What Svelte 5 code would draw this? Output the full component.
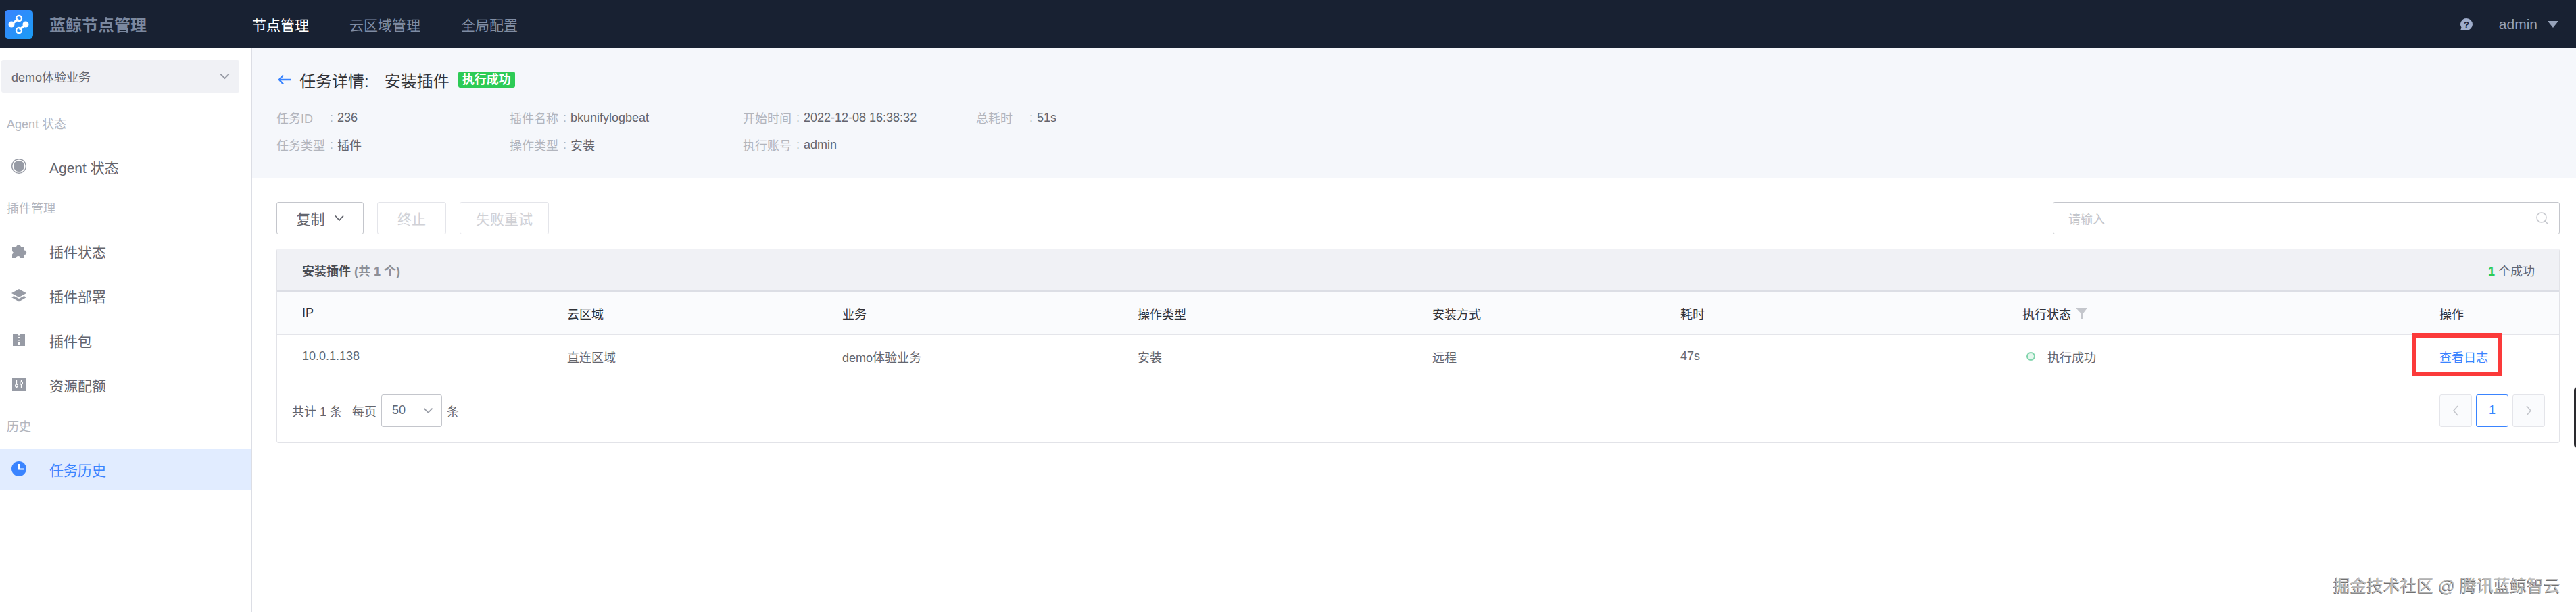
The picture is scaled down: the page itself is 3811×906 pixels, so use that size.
<script lang="ts">
	const navItems = ['节点管理', '云区域管理', '全局配置'];

	const metaColumns = [
		[
			{ label: '任务ID', value: '236' },
			{ label: '任务类型', value: '插件' }
		],
		[
			{ label: '插件名称', value: 'bkunifylogbeat' },
			{ label: '操作类型', value: '安装' }
		],
		[
			{ label: '开始时间', value: '2022-12-08 16:38:32' },
			{ label: '执行账号', value: 'admin' }
		],
		[{ label: '总耗时', value: '51s' }]
	];

	const columns = ['IP', '云区域', '业务', '操作类型', '安装方式', '耗时', '执行状态', '操作'];
</script>

<div class="page">
	<header class="topbar">
		<div class="brand">
			<span class="logo">
				<svg viewBox="0 0 42 42" width="42" height="42">
					<path d="M10 21 20 13M31 21 22 29" stroke="#fff" stroke-width="3.200" fill="none" />
					<circle cx="10" cy="21" r="4.500" fill="#fff" />
					<circle cx="31" cy="21" r="4.500" fill="#fff" />
					<circle cx="21" cy="12" r="4" fill="none" stroke="#fff" stroke-width="2.400" />
					<circle cx="21" cy="30" r="4" fill="none" stroke="#fff" stroke-width="2.400" />
				</svg>
			</span>
			<span class="brand-name">蓝鲸节点管理</span>
		</div>
		<nav class="nav">
			{#each navItems as item, i}
				<span class:current={i === 0}>{item}</span>
			{/each}
		</nav>
		<div class="user">
			<svg class="help" viewBox="0 0 20 20" width="20" height="20">
				<path d="M10 1a9 9 0 1 1 0 18H1.500v-1.500L2.600 15A9 9 0 0 1 10 1z" fill="#9fadcb" />
				<text x="10" y="14.500" text-anchor="middle" class="help-mark">?</text>
			</svg>
			<span>admin</span>
			<i class="user-caret"></i>
		</div>
	</header>

	<div class="body">
		<aside class="side">
			<div class="biz-select">
				<span>demo体验业务</span>
				<svg viewBox="0 0 16 10" width="15" height="10"><path d="M1.500 1.500 8 8l6.500-6.500" fill="none" stroke="#979ba5" stroke-width="2" /></svg>
			</div>

			<div class="group-label first">Agent 状态</div>
			<div class="menu-item last">
				<svg viewBox="0 0 24 24" width="24" height="24">
					<circle cx="12" cy="12" r="10.300" fill="none" stroke="#979ba5" stroke-width="1.400" />
					<circle cx="12" cy="12" r="8" fill="#979ba5" />
				</svg>
				<span>Agent 状态</span>
			</div>

			<div class="group-label">插件管理</div>
			<div class="menu-item">
				<svg viewBox="0 0 24 24" width="24" height="24">
					<path d="M2 7h6a3.500 3.500 0 1 1 7 0h5v4.500a3.200 3.200 0 1 1 0 6.400V23h-6a3 3 0 0 0-6 0H2v-5.500l2-2.500-2-2.500z" fill="#979ba5" />
				</svg>
				<span>插件状态</span>
			</div>
			<div class="menu-item">
				<svg viewBox="0 0 24 24" width="24" height="24">
					<path d="M12 3 23 9l-11 6L1 9z" fill="#979ba5" />
					<path d="M4.500 13 1 15l11 6.500L23 15l-3.500-2-7.500 4z" fill="#979ba5" />
				</svg>
				<span>插件部署</span>
			</div>
			<div class="menu-item">
				<svg viewBox="0 0 24 24" width="24" height="24">
					<path d="M3 3h18v18H3z" fill="#979ba5" />
					<path d="M11 4h3v1.500h-3zM10.500 8h3v1.500h-3zM11 12h3v1.500h-3zM10.500 16h3.500v3h-3.500z" fill="#fff" />
				</svg>
				<span>插件包</span>
			</div>
			<div class="menu-item last">
				<svg viewBox="0 0 24 24" width="24" height="24">
					<path d="M2 2h20v20H2z" fill="#979ba5" />
					<path d="M8.500 6v12M15.500 6v12" stroke="#fff" stroke-width="1.300" />
					<circle cx="8.500" cy="14" r="1.900" fill="#979ba5" stroke="#fff" stroke-width="1.300" />
					<circle cx="15.500" cy="10" r="1.900" fill="#979ba5" stroke="#fff" stroke-width="1.300" />
				</svg>
				<span>资源配额</span>
			</div>

			<div class="group-label">历史</div>
			<div class="menu-item active">
				<svg viewBox="0 0 24 24" width="24" height="24">
					<circle cx="12" cy="12" r="11" fill="#3a84ff" />
					<path d="M12 5v7.500h7" fill="none" stroke="#fff" stroke-width="2" />
				</svg>
				<span>任务历史</span>
			</div>
		</aside>

		<main class="main">
			<section class="detail-head">
				<div class="title-row">
					<svg viewBox="0 0 20 16" width="20" height="16"><path d="M8 1.500 2 8l6 6.500M2 8h17" fill="none" stroke="#3a84ff" stroke-width="2.500" /></svg>
					<span class="title">任务详情:</span>
					<span class="title plugin">安装插件</span>
					<span class="badge">执行成功</span>
				</div>
				<div class="meta">
					{#each metaColumns as col}
						<div class="meta-col">
							{#each col as row}
								<div class="meta-row">
									<span class="meta-label">{row.label}</span><span class="colon">:</span><span class="meta-value">{row.value}</span>
								</div>
							{/each}
						</div>
					{/each}
				</div>
			</section>

			<section class="content">
				<div class="toolbar">
					<button class="btn">复制
						<svg viewBox="0 0 14 10" width="14" height="10"><path d="M1 1.500 7 8l6-6.500" fill="none" stroke="#63656e" stroke-width="1.800" /></svg>
					</button>
					<button class="btn disabled stop">终止</button>
					<button class="btn disabled retry">失败重试</button>
					<div class="search">
						<span>请输入</span>
						<svg viewBox="0 0 20 20" width="20" height="20"><circle cx="9" cy="9" r="7" fill="none" stroke="#c4c6cc" stroke-width="1.500" /><path d="m14 14 4.500 4.500" stroke="#c4c6cc" stroke-width="1.500" /></svg>
					</div>
				</div>

				<div class="panel">
					<div class="panel-head">
						<span><b>安装插件</b> <em>(共 1 个)</em></span>
						<span class="success-count"><b>1</b> 个成功</span>
					</div>
					<div class="grid thead">
						{#each columns as col}
							<div class="cell">
								{col}
								{#if col === '执行状态'}
									<svg viewBox="0 0 17 17" width="17" height="17"><path d="M0 1h17L11 9v8H7.500V9z" fill="#c4c6cc" /></svg>
								{/if}
							</div>
						{/each}
					</div>
					<div class="grid tbody">
						<div class="cell">10.0.1.138</div>
						<div class="cell">直连区域</div>
						<div class="cell">demo体验业务</div>
						<div class="cell">安装</div>
						<div class="cell">远程</div>
						<div class="cell">47s</div>
						<div class="cell status"><i class="dot"></i>执行成功</div>
						<div class="cell link">查看日志</div>
					</div>
					<div class="pager-row">
						<div class="total">
							<span class="count">共计 1 条</span>
							<span class="per">每页</span>
							<span class="size">50
								<svg viewBox="0 0 16 10" width="15" height="10"><path d="M1.500 1.500 8 8l6.500-6.500" fill="none" stroke="#979ba5" stroke-width="1.800" /></svg>
							</span>
							<span>条</span>
						</div>
						<div class="pager">
							<span class="page-btn"><svg viewBox="0 0 10 18" width="10" height="18"><path d="M8 2 2 9l6 7" fill="none" stroke="#c4c6cc" stroke-width="1.600" /></svg></span>
							<span class="page-btn on">1</span>
							<span class="page-btn"><svg viewBox="0 0 10 18" width="10" height="18"><path d="m2 2 6 7-6 7" fill="none" stroke="#c4c6cc" stroke-width="1.600" /></svg></span>
						</div>
					</div>
				</div>
			</section>
		</main>
	</div>

	<!-- annotation and watermark lie over the page -->
	<div class="callout"></div>
	<div class="edge-tab"></div>
	<div class="watermark">掘金技术社区 @ 腾讯蓝鲸智云</div>
</div>

<style>
	:global(body) {
		margin: 0;
		background: #fff;
	}

	.page {
		position: relative;
		width: 3811px;
		height: 906px;
		overflow: hidden;
		font-family: 'Liberation Sans', 'Noto Sans CJK SC', sans-serif;
		font-size: 18px;
		color: #63656e;
	}

	.topbar {
		display: flex;
		align-items: center;
		height: 71px;
		padding: 0 26px 0 7px;
		box-sizing: border-box;
		background: #182132;
	}

	.brand {
		display: flex;
		align-items: center;
		gap: 24px;
		width: 366px;
	}

	.logo {
		display: block;
		width: 42px;
		height: 42px;
		border-radius: 5px;
		background: linear-gradient(135deg, #3a84ff, #1a9cf5);
	}

	.logo svg {
		display: block;
	}

	.brand-name {
		font-size: 24px;
		font-weight: 700;
		color: #7b889f;
	}

	.nav {
		display: flex;
		gap: 60px;
		font-size: 21px;
		color: #7f8ca3;
	}

	.nav .current {
		color: #fff;
	}

	.user {
		display: flex;
		align-items: center;
		margin-left: auto;
		font-size: 21px;
		color: #96a2b9;
	}

	.help {
		margin-right: 38px;
	}

	.help-mark {
		font-size: 13px;
		font-weight: 700;
		fill: #182132;
	}

	.user-caret {
		width: 0;
		height: 0;
		margin-left: 15px;
		border-left: 8px solid transparent;
		border-right: 8px solid transparent;
		border-top: 10px solid #96a2b9;
	}

	.body {
		display: flex;
		height: 835px;
	}

	.side {
		width: 373px;
		flex: none;
		box-sizing: border-box;
		padding-top: 18px;
		border-right: 1px solid #dcdee5;
	}

	.biz-select {
		display: flex;
		align-items: center;
		justify-content: space-between;
		width: 352px;
		height: 48px;
		margin-left: 2px;
		padding: 0 14px 0 15px;
		box-sizing: border-box;
		border-radius: 3px;
		background: #f0f1f5;
		font-size: 18px;
	}

	.group-label {
		height: 65px;
		padding-left: 10px;
		padding-bottom: 5px;
		box-sizing: border-box;
		display: flex;
		align-items: center;
		color: #b2b5bd;
	}

	.group-label.first {
		margin-top: 15px;
	}

	.menu-item {
		display: flex;
		align-items: center;
		gap: 33px;
		height: 60px;
		margin-bottom: 6px;
		padding-left: 16px;
		font-size: 21px;
		color: #63656e;
	}

	.menu-item svg {
		margin-bottom: 2px;
	}

	.menu-item.last {
		margin-bottom: 0;
	}

	.menu-item.active {
		background: #e1ecff;
		color: #3a84ff;
	}

	.main {
		flex: 1;
		min-width: 0;
	}

	.detail-head {
		height: 192px;
		padding: 34px 36px 0;
		box-sizing: border-box;
		background: #f5f7fb;
	}

	.title-row {
		display: flex;
		align-items: center;
		height: 26px;
		padding-left: 2px;
	}

	.title {
		margin-left: 12px;
		font-size: 24px;
		color: #313238;
	}

	.title.plugin {
		margin-left: 23px;
	}

	.badge {
		margin-left: 13px;
		padding: 0 6px;
		height: 24px;
		line-height: 24px;
		border-radius: 3px;
		background: #2dcb56;
		color: #fff;
		font-size: 18px;
		font-weight: 700;
	}

	.meta {
		display: flex;
		margin-top: 23px;
	}

	.meta-col {
		width: 345px;
		flex: none;
	}

	.meta-row {
		display: flex;
		align-items: center;
		height: 40px;
	}

	.meta-label {
		width: 72px;
		flex: none;
		color: #b2b5bd;
	}

	.colon {
		width: 18px;
		flex: none;
		color: #b2b5bd;
		padding-left: 7px;
		box-sizing: border-box;
	}

	.meta-value {
		color: #63656e;
	}

	.content {
		padding: 36px 24px 0 36px;
	}

	.toolbar {
		display: flex;
		gap: 20px;
		height: 48px;
		margin-bottom: 21px;
	}

	.btn {
		display: flex;
		align-items: center;
		justify-content: center;
		gap: 14px;
		width: 129px;
		height: 48px;
		padding: 0;
		border: 1px solid #c4c6cc;
		border-radius: 3px;
		background: #fff;
		font: inherit;
		font-size: 21px;
		color: #63656e;
	}

	.btn.disabled {
		border-color: #e4e5ea;
		color: #d0d1d6;
	}

	.btn.stop {
		width: 102px;
	}

	.btn.retry {
		width: 132px;
	}

	.search {
		display: flex;
		align-items: center;
		justify-content: space-between;
		width: 750px;
		height: 48px;
		margin-left: auto;
		padding: 0 15px 0 22px;
		box-sizing: border-box;
		border: 1px solid #c4c6cc;
		border-radius: 3px;
		color: #c4c6cc;
	}

	.panel {
		border: 1px solid #e2e3e8;
		border-radius: 3px;
	}

	.panel-head {
		display: flex;
		align-items: center;
		justify-content: space-between;
		height: 61px;
		padding: 0 36px 0 37px;
		background: #f0f1f5;
		border-bottom: 2px solid #dcdee5;
	}

	.panel-head b {
		color: #4a4c53;
	}

	.panel-head em {
		font-style: normal;
		font-weight: 700;
		color: #8d8f96;
	}

	.success-count b {
		color: #2dcb56;
	}

	.grid {
		display: grid;
		grid-template-columns: 392px 407px 437px 436px 367px 506px 617px 1fr;
		height: 64px;
		border-bottom: 1px solid #e4e5ea;
		box-sizing: border-box;
	}

	.thead {
		background: #fafbfd;
		color: #313238;
	}

	.cell {
		display: flex;
		align-items: center;
		gap: 7px;
		padding-left: 37px;
	}

	.status {
		gap: 18px;
		padding-left: 43px;
	}

	.dot {
		width: 9px;
		height: 9px;
		border: 2px solid #7fd4ab;
		border-radius: 50%;
		background: #e6f7ee;
	}

	.link {
		color: #3a84ff;
	}

	.pager-row {
		display: flex;
		align-items: center;
		justify-content: space-between;
		height: 95px;
		padding: 0 21px 0 22px;
	}

	.total {
		display: flex;
		align-items: center;
		gap: 7px;
	}

	.count {
		width: 71px;
		white-space: nowrap;
	}

	.per {
		margin-left: 11px;
	}

	.size {
		display: flex;
		align-items: center;
		justify-content: space-between;
		width: 90px;
		height: 48px;
		padding: 0 12px 0 15px;
		box-sizing: border-box;
		border: 1px solid #c4c6cc;
		border-radius: 3px;
	}

	.pager {
		display: flex;
		gap: 6px;
	}

	.page-btn {
		display: flex;
		align-items: center;
		justify-content: center;
		width: 48px;
		height: 48px;
		box-sizing: border-box;
		border: 1px solid #e4e5ea;
		border-radius: 3px;
		background: #fafbfd;
	}

	.page-btn.on {
		border-color: #3a84ff;
		background: #fff;
		color: #3a84ff;
	}

	.callout {
		position: absolute;
		left: 3568px;
		top: 493px;
		width: 134px;
		height: 64px;
		box-sizing: border-box;
		border: 7px solid #fb3a3a;
	}

	.edge-tab {
		position: absolute;
		left: 3808px;
		top: 573px;
		width: 10px;
		height: 90px;
		border-radius: 5px 0 0 5px;
		background: #2a2a2e;
	}

	.watermark {
		position: absolute;
		left: 3452px;
		top: 852px;
		font-size: 24.75px;
		line-height: 32px;
		white-space: nowrap;
		color: #bdbdbd;
		text-shadow: -1px 1px 0 #6f6f6f, 1px -1px 0 #fff;
	}
</style>
